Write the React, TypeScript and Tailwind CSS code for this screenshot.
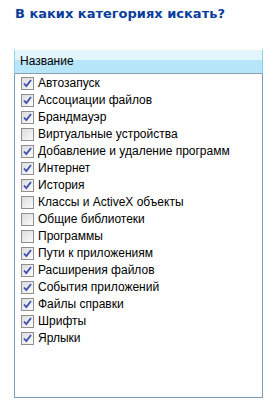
import React from "react";

const items: [string, boolean][] = [
  ["Автозапуск", true],
  ["Ассоциации файлов", true],
  ["Брандмауэр", true],
  ["Виртуальные устройства", false],
  ["Добавление и удаление программ", true],
  ["Интернет", true],
  ["История", true],
  ["Классы и ActiveX объекты", false],
  ["Общие библиотеки", false],
  ["Программы", false],
  ["Пути к приложениям", true],
  ["Расширения файлов", true],
  ["События приложений", true],
  ["Файлы справки", true],
  ["Шрифты", true],
  ["Ярлыки", true],
];

function Box({ checked }: { checked: boolean }) {
  return (
    <div className="w-[13px] h-[13px] border border-[#8f8f8f] bg-gradient-to-br from-[#dcdcdc] to-[#fbfbfb] flex items-center justify-center shrink-0">
      {checked && (
        <svg width="9" height="9" viewBox="0 0 9 9">
          <path d="M1 4.5 L3.3 7 L8 1" stroke="#3b4fb2" strokeWidth="1.8" fill="none" />
        </svg>
      )}
    </div>
  );
}

export default function App() {
  return (
    <div className="w-[274px] h-[416px] bg-white" style={{ fontFamily: "'Liberation Sans', Arial, sans-serif" }}>
      <div className="pl-[15px] pt-[5px] text-[13px] leading-[18px] font-bold text-[#0a3d9c]" style={{ fontFamily: "'DejaVu Sans', Verdana, sans-serif" }}>
        В каких категориях искать?
      </div>
      <div className="ml-[14px] mt-[27px] w-[249px] h-[348px] flex flex-col">
        <div className="h-[24px] border-x border-[#8ed3ee] border-b border-b-[#8c9fb1] bg-[linear-gradient(#e3f6fd_0px,#e3f6fd_10px,#b7e6fa_10px,#b7e6fa_100%)] pl-[5px] text-[12px] leading-[23px] text-black">
          Название
        </div>
        <div className="flex-1 border-x border-b border-[#7a9dba] pt-[1px] pl-[6px]">
          {items.map(([label, c]) => (
            <div key={label} className="h-[17px] flex items-center gap-[4px] text-[12px] text-black">
              <Box checked={c} />
              <span className="leading-[17px]">{label}</span>
            </div>
          ))}
        </div>
      </div>
    </div>
  );
}
